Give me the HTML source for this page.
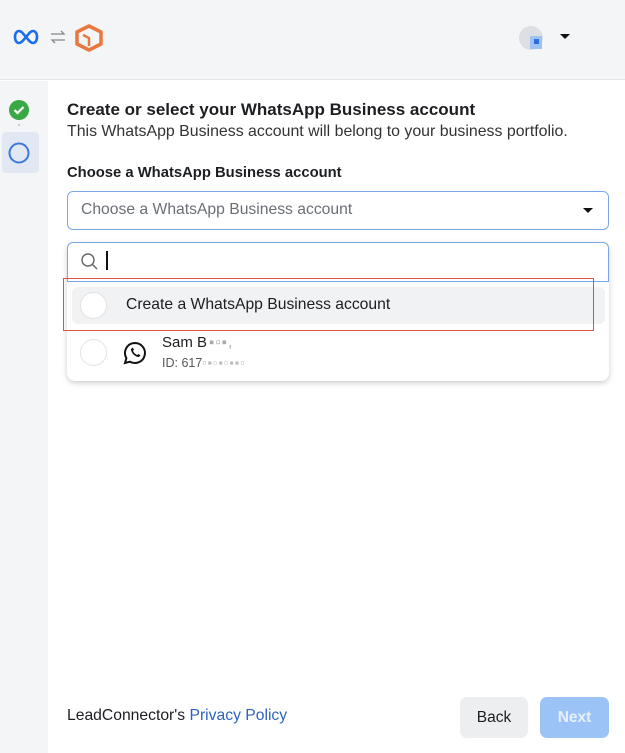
<!DOCTYPE html>
<html><head><style>
*{box-sizing:border-box;margin:0;padding:0}
body{width:625px;height:753px;position:relative;background:#fff;font-family:"Liberation Sans",Arial,sans-serif;color:#1c1e21;overflow:hidden}
.hdr{position:absolute;left:0;top:0;width:625px;height:80px;background:#f4f5f7;border-bottom:1px solid #e4e6ea}
.side{position:absolute;left:0;top:81px;width:48px;height:672px;background:#f4f5f7}
.abs{position:absolute;white-space:nowrap}
</style></head><body>
<div class="hdr"></div>
<div class="side"></div>
<svg class="abs" style="left:11px;top:28px" width="30" height="18" viewBox="0 0 30 18"><path d="M4 9c0-4 2-6 4-6 3 0 5 4 7 6 2 2 4 6 7 6 2 0 4-2 4-6s-2-6-4-6c-3 0-5 4-7 6-2 2-4 6-7 6-2 0-4-2-4-6z" fill="none" stroke="#1a6ef0" stroke-width="2.6"/></svg>
<svg class="abs" style="left:49px;top:29px" width="18" height="16" viewBox="0 0 18 16"><path d="M2 5h13l-3-3M16 11H3l3 3" fill="none" stroke="#888" stroke-width="1.3"/></svg>
<svg class="abs" style="left:74px;top:24px" width="30" height="28" viewBox="0 0 30 28"><path d="M15 2 27 8v12l-12 6L3 20V8z" fill="none" stroke="#e8783f" stroke-width="3.5" stroke-linejoin="round"/><path d="M9 11l6 3v8" fill="none" stroke="#e8783f" stroke-width="2.5"/></svg>
<div class="abs" style="left:519px;top:26px;width:24px;height:24px;border-radius:50%;background:#dcdfe4"></div>
<div class="abs" style="left:530px;top:36px;width:12px;height:13px;background:#9fc2f2"></div>
<div class="abs" style="left:534px;top:39px;width:5px;height:5px;background:#2d6be0"></div>
<div class="abs" style="left:560px;top:34px;width:0;height:0;border-left:5px solid transparent;border-right:5px solid transparent;border-top:5px solid #111"></div>
<svg class="abs" style="left:8px;top:99px" width="22" height="22"><circle cx="11" cy="11" r="10" fill="#3aa845"/><path d="M6.5 11l3 3 6-6" stroke="#fff" stroke-width="2.2" fill="none"/></svg>
<div class="abs" style="left:18px;top:124px;width:2px;height:2px;background:#ccc"></div>
<div class="abs" style="left:2px;top:132px;width:37px;height:41px;background:#e2e8f3;border-radius:4px"></div>
<svg class="abs" style="left:8px;top:142px" width="22" height="22"><circle cx="11" cy="11" r="9.5" fill="none" stroke="#3b78d8" stroke-width="2"/></svg>
<div class="abs" style="left:67px;top:100px;font-size:17px;font-weight:bold">Create or select your WhatsApp Business account</div>
<div class="abs" style="left:67px;top:123px;font-size:15.9px;color:#333">This WhatsApp Business account will belong to your business portfolio.</div>
<div class="abs" style="left:67px;top:165px;font-size:14.8px;font-weight:bold">Choose a WhatsApp Business account</div>
<div class="abs" style="left:67px;top:191px;width:542px;height:39px;border:1.5px solid #7aa7e6;border-radius:6px"></div>
<div class="abs" style="left:81px;top:201px;font-size:15.7px;color:#6b6f76">Choose a WhatsApp Business account</div>
<div class="abs" style="left:583px;top:208px;border-left:5px solid transparent;border-right:5px solid transparent;border-top:5px solid #111"></div>
<div class="abs" style="left:67px;top:242px;width:542px;height:139px;border-radius:8px;box-shadow:0 2px 6px rgba(0,0,0,.2);background:#fff"></div>
<div class="abs" style="left:67px;top:242px;width:542px;height:40px;border:1.5px solid #7aa7e6;border-radius:6px 6px 0 0"></div>
<svg class="abs" style="left:80px;top:252px" width="20" height="20"><circle cx="8" cy="8" r="6" fill="none" stroke="#666" stroke-width="1.4"/><path d="M12.5 12.5 17 17" stroke="#666" stroke-width="1.4"/></svg>
<div class="abs" style="left:106px;top:251px;width:2px;height:19px;background:#111"></div>
<div class="abs" style="left:72px;top:287px;width:533px;height:37px;background:#f1f2f4;border-radius:6px"></div>
<div class="abs" style="left:80px;top:292px;width:27px;height:27px;border-radius:50%;background:#fff;border:1px solid #e3e3e3"></div>
<div class="abs" style="left:126px;top:296px;font-size:15.7px">Create a WhatsApp Business account</div>
<div class="abs" style="left:63px;top:278px;width:531px;height:53px;border:1.5px solid #d9534a"></div>
<div class="abs" style="left:80px;top:339px;width:27px;height:27px;border-radius:50%;background:#fff;border:1px solid #e3e3e3"></div>
<svg class="abs" style="left:122px;top:340px" width="26" height="26" viewBox="0 0 26 26"><path d="M13 3a10 10 0 0 0-8.6 15.1L3 23l5-1.3A10 10 0 1 0 13 3z" fill="none" stroke="#111" stroke-width="2"/><path d="M9 9c0 4 4 8 8 8l1.5-1.7-2.3-1.3-1 1c-2-.8-3.5-2.3-4.2-4.2l1-1L10.7 7.5z" fill="#111"/></svg>
<div class="abs" style="left:162px;top:334px;font-size:15px">Sam B<span style="color:#aaa;letter-spacing:1px;margin-left:2px">▪▫▪,</span></div>
<div class="abs" style="left:162px;top:356px;font-size:12.5px;color:#555">ID: 617<span style="color:#bbb;letter-spacing:1px">▫▪▫▪▫▪▪▫</span></div>
<div class="abs" style="left:67px;top:707px;font-size:15.7px">LeadConnector's <span style="color:#2e63c2">Privacy Policy</span></div>
<div class="abs" style="left:460px;top:697px;width:68px;height:41px;background:#eceef0;border-radius:7px;font-size:15.5px;text-align:center;line-height:41px">Back</div>
<div class="abs" style="left:540px;top:697px;width:69px;height:41px;background:#9cc3f5;border-radius:7px;font-size:15.5px;text-align:center;line-height:41px;color:#e6f0fc;font-weight:bold">Next</div>
</body></html>
